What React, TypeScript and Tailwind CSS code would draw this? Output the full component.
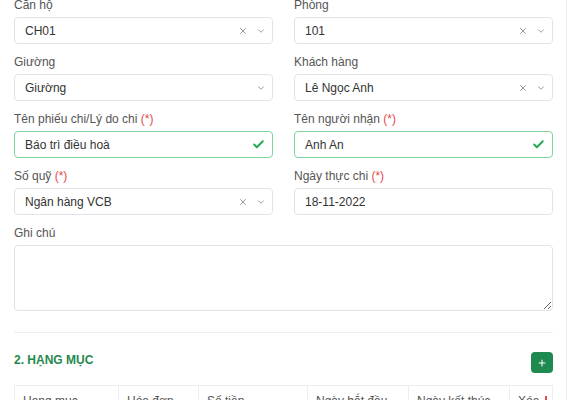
import { X, ChevronDown, Check, Plus } from 'lucide-react';

function Label({ text, required }: { text: string; required?: boolean }) {
    return (
        <div className="h-[16px] mb-[4px] leading-[16px] text-[12px] text-[#555]">
            {text}
            {required && <span className="text-[#e5484d]"> (*)</span>}
        </div>
    );
}

function SelectBox({ value, clearable = true }: { value: string; clearable?: boolean }) {
    return (
        <div className="h-[27px] flex items-center border border-[#e1e3e8] rounded-[4px] pl-[10px] pr-[6px] bg-white">
            <span className="flex-1 text-[12px] text-[#333] truncate">{value}</span>
            {clearable && <X className="w-[10px] h-[10px] text-[#888] mr-[8px]" strokeWidth={2} />}
            <ChevronDown className="w-[10px] h-[10px] text-[#888]" strokeWidth={2} />
        </div>
    );
}

function TextBox({ value, valid }: { value: string; valid?: boolean }) {
    return (
        <div
            className={`h-[27px] flex items-center border rounded-[4px] pl-[10px] pr-[7px] bg-white ${
                valid ? 'border-[#7fd59c]' : 'border-[#e1e3e8]'
            }`}
        >
            <span className="flex-1 text-[12px] text-[#333] truncate">{value}</span>
            {valid && <Check className="w-[13px] h-[13px] text-[#22a94f]" strokeWidth={3.5} />}
        </div>
    );
}

export default function App() {
    const headers = [
        { name: 'Hạng mục', w: 'w-[104px]' },
        { name: 'Hóa đơn', w: 'w-[80px]' },
        { name: 'Số tiền', w: 'w-[109px]' },
        { name: 'Ngày bắt đầu', w: 'w-[101px]' },
        { name: 'Ngày kết thúc', w: 'w-[101px]' },
    ];

    return (
        <div
            className="w-[570px] h-[400px] overflow-hidden flex bg-white"
            style={{ fontFamily: '"Liberation Sans", Arial, sans-serif' }}
        >
            <div className="w-[567px] border-r border-[#ececec] pl-[14px] pr-[13px]">
                <div className="-mt-[3px] grid grid-cols-2 gap-x-[21px] gap-y-[10px]">
                    <div>
                        <Label text="Căn hộ" />
                        <SelectBox value="CH01" />
                    </div>
                    <div>
                        <Label text="Phòng" />
                        <SelectBox value="101" />
                    </div>
                    <div>
                        <Label text="Giường" />
                        <SelectBox value="Giường" clearable={false} />
                    </div>
                    <div>
                        <Label text="Khách hàng" />
                        <SelectBox value="Lê Ngọc Anh" />
                    </div>
                    <div>
                        <Label text="Tên phiếu chi/Lý do chi" required />
                        <TextBox value="Báo trì điều hoà" valid />
                    </div>
                    <div>
                        <Label text="Tên người nhận" required />
                        <TextBox value="Anh An" valid />
                    </div>
                    <div>
                        <Label text="Số quỹ" required />
                        <SelectBox value="Ngân hàng VCB" />
                    </div>
                    <div>
                        <Label text="Ngày thực chi" required />
                        <TextBox value="18-11-2022" />
                    </div>
                    <div className="col-span-2">
                        <Label text="Ghi chú" />
                        <textarea
                            className="block w-full h-[66px] border border-[#e1e3e8] rounded-[4px] outline-none"
                            defaultValue=""
                        />
                    </div>
                </div>

                <div className="mt-[21px] border-t border-[#eceef2]" />

                <div className="mt-[18px] flex items-center justify-between">
                    <div className="text-[12px] font-bold text-[#1f8a4c] pb-[5px]">2. HẠNG MỤC</div>
                    <button className="w-[22px] h-[21px] rounded-[4px] bg-[#1f8a4f] flex items-center justify-center">
                        <Plus className="w-[10px] h-[10px] text-white" strokeWidth={2.5} />
                    </button>
                </div>

                <div className="mt-[11px] flex border border-[#eceef2] h-[40px]">
                    {headers.map((h) => (
                        <div
                            key={h.name}
                            className={`${h.w} border-r border-[#eceef2] pl-[8px] pt-[6px] text-[12px] text-[#555]`}
                        >
                            {h.name}
                        </div>
                    ))}
                    <div className="flex-1 pl-[8px] pt-[6px] text-[12px] text-[#555] flex items-start">
                        Xóa
                        <span className="ml-[6px] mt-[4px] w-[2px] h-[8px] bg-[#e5484d]" />
                    </div>
                </div>
            </div>
            <div className="flex-1 bg-white" />
        </div>
    );
}
